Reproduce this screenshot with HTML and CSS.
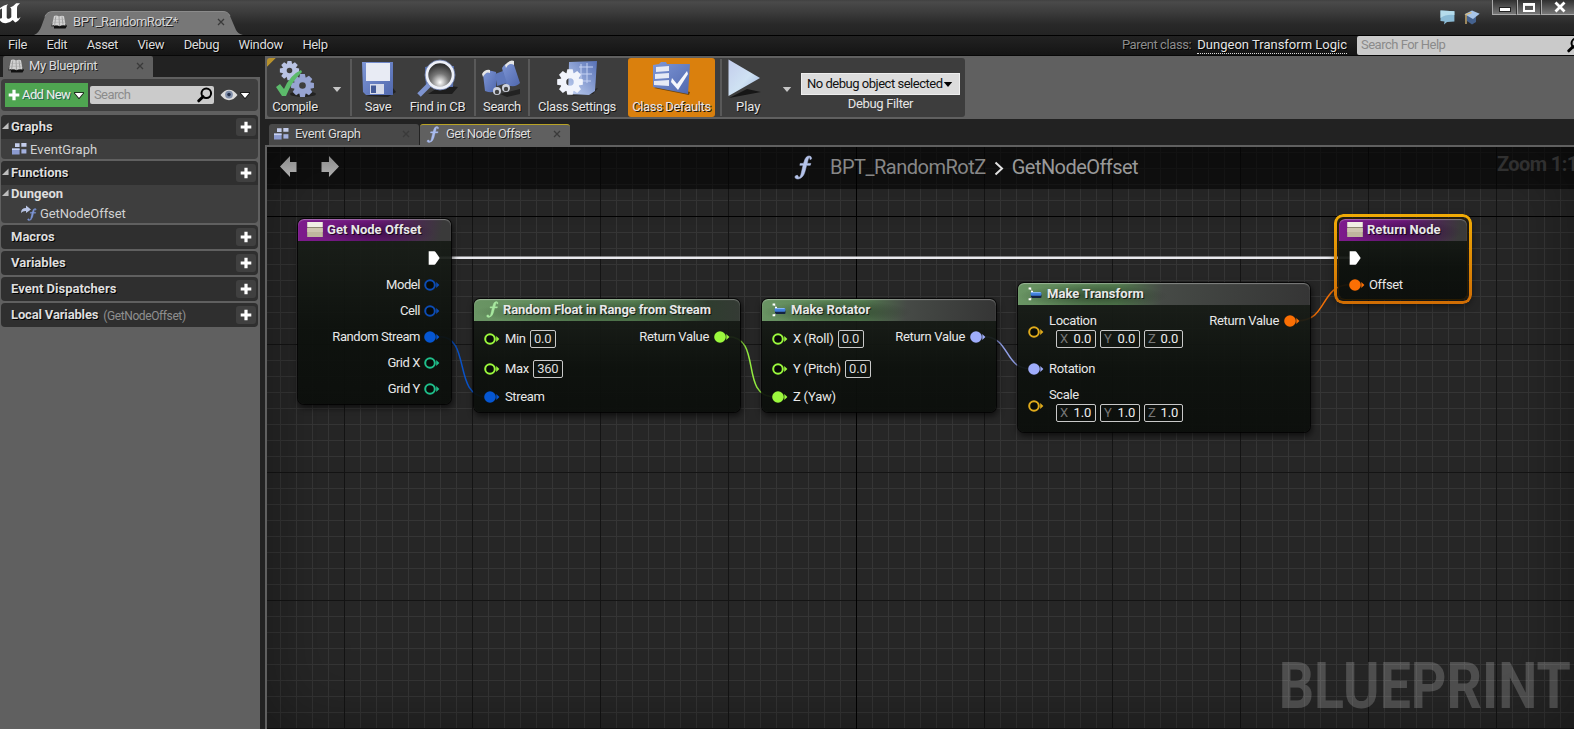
FILE: index.html
```html
<!DOCTYPE html>
<html lang="en">
<head>
<meta charset="utf-8">
<title>BPT_RandomRotZ</title>
<link rel="stylesheet" href="styles.css">
</head>
<body>
<svg class="defs" width="0" height="0">
  <defs>
    <linearGradient id="blue" x1="0" y1="0" x2="1" y2="1"><stop offset="0" stop-color="#7f97d6"/><stop offset="1" stop-color="#5068ae"/></linearGradient>
    <linearGradient id="pale" x1="0" y1="1" x2="1" y2="0"><stop offset="0" stop-color="#c3d3f3"/><stop offset="1" stop-color="#5670b5"/></linearGradient>
    <linearGradient id="playg" x1="0" y1="0" x2="1" y2="1"><stop offset="0" stop-color="#c3cdec"/><stop offset=".55" stop-color="#cfe2f3"/><stop offset="1" stop-color="#9db3dd"/></linearGradient>
    <radialGradient id="lens" cx=".5" cy=".78" r=".75"><stop offset="0" stop-color="#fff"/><stop offset=".45" stop-color="#777"/><stop offset="1" stop-color="#222"/></radialGradient>
    <linearGradient id="arrowg" x1="0" y1="0" x2="0" y2="1"><stop offset="0" stop-color="#8a8a8a"/><stop offset="1" stop-color="#b0b0b0"/></linearGradient>
  </defs>
  <symbol id="pin-open" viewBox="0 0 16 14"><circle cx="6" cy="7" r="4.8" fill="#080b08" stroke="currentColor" stroke-width="2"/><path d="M12.2 4 15.4 7 12.2 10Z" fill="currentColor"/></symbol>
  <symbol id="pin-full" viewBox="0 0 16 14"><circle cx="6" cy="7" r="5.8" fill="currentColor"/><path d="M12.3 4 15.4 7 12.3 10Z" fill="currentColor"/></symbol>
  <symbol id="exec" viewBox="0 0 12 14"><path d="M.7.3H6.3Q7 .3 7.5.9L11.7 7 7.5 13Q7 13.7 6.3 13.7H.7Z" fill="#fff"/></symbol>
  <symbol id="plus" viewBox="0 0 12 12"><path d="M4.4 .7h3.2v3.7H11.3v3.2H7.6V11.3H4.4V7.6H.7V4.4h3.7Z" fill="#fff"/></symbol>
  <symbol id="close" viewBox="0 0 8 8"><path d="M1 1 7 7M7 1 1 7" stroke="currentColor" stroke-width="1.3"/></symbol>
  <symbol id="caret" viewBox="0 0 10 7"><path d="M.8 1h8.4L5 6Z"/></symbol>
  <symbol id="tri" viewBox="0 0 8 8"><path d="M7.5 0V7.5H0Z" fill="#bdbdbd"/></symbol>
  <symbol id="mag" viewBox="0 0 16 16"><circle cx="9.3" cy="6.3" r="4.8" fill="none" stroke="#000" stroke-width="2"/><path d="M6 9.7 1.8 13.8" stroke="#000" stroke-width="3" stroke-linecap="round"/></symbol>
  <symbol id="book" viewBox="0 0 16 14"><path d="M.5 11.5 1 8 3 9.5V13.5H14.5L16 11 14.5 9Z" fill="#111"/><path d="M3 1Q5.5 0 8 1.5 11 0 13 1.2L14.6 10.5Q11 9.5 8.5 11.2 5 9.3 1 10.6Z" fill="#d2d2d2"/><path d="M8 1.5 8.5 11M4.8 1.5 3.7 9.8M11 1.5 12 9.6" stroke="#888" stroke-width=".7"/><path d="M2.4 4.4h11M1.8 7.3h12" stroke="#a5a5a5" stroke-width=".5"/></symbol>
  <symbol id="graph" viewBox="0 0 17 14"><path d="M4 1.2h4.6V5H4zM10.3 1h5.2v3.8h-5.2z" fill="#c4cdeb"/><path d="M1 6.5h7.6v6H1z" fill="#8c9bd0"/><path d="M1 6.5h7.6v1.6H1z" fill="#c7d1f0"/><path d="M10.4 7.2h5v4.4h-5z" fill="#a3b0dd"/></symbol>
  <symbol id="func" viewBox="0 0 14 18"><path d="M13 2.2Q12.8.5 11.2.5 8.5.6 7.6 4.3L7 6H4.6L4.3 7.4H6.7L5 14.5Q4.6 16.3 3.6 16.4L2.6 14.8Q1 14.6.6 16q.3 1.6 2.4 1.5Q6.6 17 8 12.4L9.3 7.4H12L12.4 6H9.7L10.5 2.7Q11 1.4 11.6 1.5L11.7 3Q12.8 3.3 13 2.2Z" fill="currentColor" stroke="currentColor" stroke-width=".4"/></symbol>
  <symbol id="gear" viewBox="-12 -12 24 24"><g fill="currentColor"><path id="tooth" d="M-2.3-11h4.6l.8 4h-6.2z"/><use href="#tooth" transform="rotate(45)"/><use href="#tooth" transform="rotate(90)"/><use href="#tooth" transform="rotate(135)"/><use href="#tooth" transform="rotate(180)"/><use href="#tooth" transform="rotate(225)"/><use href="#tooth" transform="rotate(270)"/><use href="#tooth" transform="rotate(315)"/></g><circle r="5.7" fill="none" stroke="currentColor" stroke-width="5"/></symbol>
  <symbol id="make" viewBox="0 0 14 14"><path d="M1 1 5 4.5M1 13 5 9.5" stroke="#bbb" stroke-width="1"/><path d="M.6.4h2.6v2H.6zM.6 11.3h2.6v2H.6zM3 4h2v1.8H3zM3 9h2v1.8H3z" fill="#fff"/><rect x="3" y="7" width="10.5" height="4" rx="1" fill="#14233f"/><rect x="2.6" y="5" width="10.8" height="3.8" rx="1" fill="#3e7edb"/><path d="M3 5.6h9.6" stroke="#8dbcf8"/></symbol>
  <symbol id="card" viewBox="0 0 16 15"><path d="M.3 0h15.4v15H.3z" fill="#8d8672"/><path d="M.3 0h15.4v5H.3z" fill="#f0ede4"/><path d="M.3 6h15.4V15H.3z" fill="#bfb69e"/><path d="M.3 6h15.4v4H.3z" fill="#cdc5af"/></symbol>
</svg>

<div class="app">
  <header class="titlebar">
    <svg class="logo" width="22" height="22" viewBox="0 0 22 22"><path d="M0 5Q4 1.6 8 1.2 6.4 2.6 6.7 4.5V14.5Q7.3 16.5 9.5 15.5 11 14.8 11.3 14V6.3Q11 4.6 10 4.6 13.6 3.4 16.2.3L20 .3Q17.2 2.5 17 5V14.3Q17.3 15.6 18.2 15.6 19 15.4 20.6 13.7 19.3 17.7 15.2 19.6L12.8 17Q10 20 5.8 20.2 1.5 20 0 17.5V15.4Q1.8 16 2 14.5V6Q1 4.6 0 7Z" fill="#fff"/></svg>
    <div class="doc-tab">
      <svg class="doc-shape" width="209" height="24" viewBox="0 0 209 24"><path d="M0 24Q5 22 7.5 15L11 5.5Q13 .5 19 .5H189Q194 .5 196 5L202 19Q204 23 209 24Z" fill="#777"/><path d="M11 5.5Q13 .5 19 .5H189Q194 .5 196 5" fill="none" stroke="#8b8b8b"/></svg>
      <div class="doc-label"><svg width="16" height="14"><use href="#book"/></svg><span>BPT_RandomRotZ*</span><svg class="x" width="8" height="8"><use href="#close"/></svg></div>
    </div>
    <div class="title-right">
      <svg width="15" height="15" viewBox="0 0 15 15"><path d="M.5.6 14.4 1.3V11.5L7 12 4 14.5 4.5 11.5.5 11Z" fill="#8bbbd6"/><path d="M.5.6 14.4 1.3V5Q6 4 .5 8Z" fill="#b5dcec"/></svg>
      <svg class="cap" width="16" height="15" viewBox="0 0 16 15"><path d="M3 6V11L8 14.5 12 12V7Z" fill="#45628e"/><path d="M.5 4.2 8 .4 15.7 3.8 9 9Z" fill="#a7c4e8"/><path d="M7.5 2.6 2 4.5V14" fill="none" stroke="#d8b878" stroke-width="1.3"/></svg>
      <div class="winbtns">
        <span class="wb w1"><svg width="12" height="5"><rect x=".5" y=".5" width="11" height="4" fill="#fff" stroke="#222"/></svg></span>
        <span class="wb w2"><svg width="14" height="11"><rect x="2" y="2" width="10" height="7" fill="none" stroke="#fff" stroke-width="2"/><path d="M3 3.4h8" stroke="#fff"/><rect x="3.5" y="4.5" width="7" height="3" fill="#555"/></svg></span>
        <span class="wb w3"><svg width="12" height="12" viewBox="0 0 12 12"><path d="M1.5 1.5 10.5 10.5M10.5 1.5 1.5 10.5" stroke="#fff" stroke-width="2.8"/></svg></span>
      </div>
    </div>
  </header>

  <nav class="menubar">
    <div class="menus"><span>File</span><span>Edit</span><span>Asset</span><span>View</span><span>Debug</span><span>Window</span><span>Help</span></div>
    <div class="parent"><span class="pc">Parent class:</span><span class="pl">Dungeon Transform Logic</span></div>
    <div class="help-search"><span>Search For Help</span><svg width="16" height="16"><use href="#mag"/></svg></div>
  </nav>

  <main class="main">
    <aside class="side">
      <div class="side-tabs"><div class="side-tab"><svg width="16" height="14"><use href="#book"/></svg><span>My Blueprint</span><svg class="x" width="8" height="8"><use href="#close"/></svg></div></div>
      <div class="side-body">
        <div class="tools">
          <div class="add"><svg width="12" height="12"><use href="#plus"/></svg><span>Add New</span><svg class="white-caret" width="10" height="7" viewBox="0 0 10 7"><use href="#caret"/></svg></div>
          <div class="search"><span>Search</span><svg width="16" height="16"><use href="#mag"/></svg></div>
          <svg class="eye" width="18" height="12" viewBox="0 0 18 12"><path d="M.5 6Q4.5.8 9 .8T17.5 6Q13.5 11.2 9 11.2T.5 6Z" fill="#dcdcdc"/><circle cx="9" cy="5.6" r="3.9" fill="#8290ab"/><circle cx="9" cy="5.6" r="1.8" fill="#26334d"/></svg>
          <svg class="white-caret" width="10" height="7" viewBox="0 0 10 7"><use href="#caret"/></svg>
        </div>
        <section class="sec">
          <div class="sec-head"><svg width="8" height="8"><use href="#tri"/></svg><b>Graphs</b><i class="plus"><svg width="12" height="12"><use href="#plus"/></svg></i></div>
          <div class="item"><svg width="17" height="14"><use href="#graph"/></svg><span>EventGraph</span></div>
        </section>
        <section class="sec">
          <div class="sec-head"><svg width="8" height="8"><use href="#tri"/></svg><b>Functions</b><i class="plus"><svg width="12" height="12"><use href="#plus"/></svg></i></div>
          <div class="cat"><svg width="8" height="8"><use href="#tri"/></svg><b>Dungeon</b></div>
          <div class="item fn"><svg width="17" height="16" viewBox="0 0 17 16"><path d="M1 8Q1 3 6 3V.5L11 4.6 6 8V6Q3 5.7 1 8Z" fill="#b9c5e6"/><svg x="7" y="3" width="10" height="13" viewBox="0 0 14 18" color="#7c95d6"><use href="#func"/></svg></svg><span>GetNodeOffset</span></div>
        </section>
        <section class="sec"><div class="sec-head"><b>Macros</b><i class="plus"><svg width="12" height="12"><use href="#plus"/></svg></i></div></section>
        <section class="sec"><div class="sec-head"><b>Variables</b><i class="plus"><svg width="12" height="12"><use href="#plus"/></svg></i></div></section>
        <section class="sec"><div class="sec-head"><b>Event Dispatchers</b><i class="plus"><svg width="12" height="12"><use href="#plus"/></svg></i></div></section>
        <section class="sec"><div class="sec-head"><b class="lv">Local Variables</b><small>(GetNodeOffset)</small><i class="plus"><svg width="12" height="12"><use href="#plus"/></svg></i></div></section>
      </div>
    </aside>

    <div class="work">
      <div class="toolbar">
        <div class="tools-in">
          <div class="tb compile"><svg width="42" height="40" viewBox="0 0 42 40"><ellipse cx="29" cy="35" rx="13" ry="3" fill="#222"/><svg x="5" y="1" width="21" height="21" color="#b9c3e4"><use href="#gear"/></svg><svg x="16" y="14" width="25" height="25" color="#97a4d2"><use href="#gear"/></svg><path d="M2 28 6 25 10 30Q16 16 27 11L28 13Q18 22 12 37H8Z" fill="#5cba6b"/></svg><span>Compile</span></div>
          <svg class="tcaret c1" width="10" height="7"><use href="#caret"/></svg>
          <i class="sep s1"></i>
          <div class="tb save"><svg width="36" height="40" viewBox="0 0 36 40"><path d="M6 37 33 29 36 33 28 38Z" fill="#222"/><path d="M2 3H33V36H6L3 33Z" fill="url(#blue)"/><path d="M6 4H30V22H6Z" fill="#e8ebf4"/><path d="M10 25H24V35H10Z" fill="#d6dbea"/><path d="M11 26.5h5V34h-5z" fill="#445a97"/></svg><span>Save</span></div>
          <div class="tb find"><svg width="44" height="40" viewBox="0 0 44 40"><path d="M12 35H36L42 28 26 26Z" fill="#1d1d1d"/><path d="M9 8 14 7H38L37 28H10Z" fill="#5870ad"/><path d="M14 25 3 36" stroke="#7e94d0" stroke-width="5"/><circle cx="24" cy="16" r="13.2" fill="url(#lens)" stroke="#edf0f8" stroke-width="3"/><circle cx="24" cy="16" r="15" fill="none" stroke="#7488be" stroke-width=".7"/></svg><span>Find in CB</span></div>
          <i class="sep s2"></i>
          <div class="tb srch"><svg width="40" height="40" viewBox="0 0 40 40"><path d="M18 35 38 30V35L25 38Z" fill="#222"/><path d="M1 15Q5 10 10 12L14 13V31Q11 35 3 32Z" fill="url(#blue)"/><path d="M20 9Q24 3 31 3L38 24Q34 29 24 26Z" fill="url(#blue)"/><path d="M13 15 21 12 25 24 15 27Z" fill="#5f78bb"/><path d="M0 15Q3 10 8 11L8 14Q4 12 1 18ZM23 6Q28 0 32 2L32 6Q27 3 24 9Z" fill="#e7e7e7"/><circle cx="15" cy="32" r="4" fill="#cfd3de"/><circle cx="15" cy="33" r="2.2" fill="#444"/><circle cx="24" cy="29" r="4" fill="#cfd3de"/><circle cx="24" cy="30" r="2.2" fill="#444"/></svg><span>Search</span></div>
          <i class="sep s3"></i>
          <div class="tb cset"><svg width="42" height="40" viewBox="0 0 42 40"><path d="M14 37 37 35 42 29Z" fill="#242424"/><path d="M13 3 41 2 39 32 33 36 12 35Z" fill="url(#pale)"/><path d="M23 8H37M23 15H36M25 22H35M25 5V20M31 4V24" stroke="#c5d2f3" fill="none"/><svg x="0" y="9" width="28" height="28" color="#f1f4fc"><use href="#gear"/></svg></svg><span>Class Settings</span></div>
          <div class="tb cdef"><svg width="42" height="40" viewBox="0 0 42 40"><path d="M3 29 38 36 39 33 10 26Z" fill="#714507"/><path d="M2 6 8 5 10 3H15L16 5H39L37 35 2 28Z" fill="url(#blue)"/><path d="M5 8 18 7V12L5 13ZM4 15 18 14V19L4 20ZM3 22 18 21V27L3 26Z" fill="#e6eaf5"/><path d="M21 19 26 25 36 12 37 15 27 31 20 23Z" fill="#f4f6fc"/></svg><span>Class Defaults</span></div>
          <i class="sep s4"></i>
          <div class="tb play"><svg width="36" height="40" viewBox="0 0 36 40"><path d="M2 39 34 33 20 30Z" fill="#161616"/><path d="M1.5.5 33 19 1.5 37Z" fill="url(#playg)"/></svg><span>Play</span></div>
          <svg class="tcaret c2" width="10" height="7"><use href="#caret"/></svg>
          <div class="filter"><div class="combo"><span>No debug object selected</span><svg width="10" height="7"><use href="#caret"/></svg></div><span class="flabel">Debug Filter</span></div>
        </div>
      </div>
      <div class="tabs">
        <div class="tab"><svg width="17" height="14"><use href="#graph"/></svg><span>Event Graph</span><svg class="x" width="8" height="8"><use href="#close"/></svg></div>
        <div class="tab active"><svg width="14" height="17" color="#a9bbee"><use href="#func"/></svg><span>Get Node Offset</span><svg class="x" width="8" height="8"><use href="#close"/></svg></div>
      </div>
      <div class="graph">
        <div class="crumbs">
          <svg class="nav back" width="17" height="23" viewBox="0 0 17 23"><path d="M0 11.5 10 1V7H16.5V17H10V22Z" fill="url(#arrowg)"/></svg>
          <svg class="nav" width="18" height="23" viewBox="0 0 18 23"><path d="M18 11.5 8 1V7H.5V17H8V22Z" fill="url(#arrowg)"/></svg>
          <div class="path"><svg width="19" height="25" color="#b5c3ea"><use href="#func"/></svg><span class="p1">BPT_RandomRotZ</span><svg class="chev" width="10" height="15" viewBox="0 0 10 15"><path d="M1.5 1.5 8 7.5 1.5 13.5" fill="none" stroke="#e2e2e2" stroke-width="2"/></svg><span class="p2">GetNodeOffset</span></div>
          <div class="zoomlbl">Zoom 1:1</div>
        </div>
        <div class="watermark">BLUEPRINT</div>
        <svg class="wires" width="1307" height="582" viewBox="267 147 1307 582" fill="none">
          <path d="M440 257.8H1350" stroke="#e9e9ee" stroke-width="2.6"/>
          <path d="M440 336.7C471 336.7 453 396.7 486 396.7" stroke="#0a52c6" stroke-width="1.5"/>
          <path d="M728 336.7C763 336.7 739 396.7 774 396.7" stroke="#93ec40" stroke-width="1.5"/>
          <path d="M984 336.7C1010 336.7 1004 368.7 1030 368.7" stroke="#92a0e8" stroke-width="1.5"/>
          <path d="M1298 320.7C1328 320.7 1320 284.7 1350 284.7" stroke="#f27006" stroke-width="1.5"/>
        </svg>

        <div class="node n1 purple">
          <div class="nhead"><svg width="16" height="15"><use href="#card"/></svg><span>Get Node Offset</span></div>
          <div class="nbody"><div class="col out">
            <div class="row"><svg class="ex" width="12" height="14"><use href="#exec"/></svg></div>
            <div class="row"><span>Model</span><svg class="obj" width="16" height="14"><use href="#pin-open"/></svg></div>
            <div class="row"><span>Cell</span><svg class="obj" width="16" height="14"><use href="#pin-open"/></svg></div>
            <div class="row"><span>Random Stream</span><svg class="struct" width="16" height="14"><use href="#pin-full"/></svg></div>
            <div class="row"><span>Grid X</span><svg class="int" width="16" height="14"><use href="#pin-open"/></svg></div>
            <div class="row"><span>Grid Y</span><svg class="int" width="16" height="14"><use href="#pin-open"/></svg></div>
          </div></div>
        </div>

        <div class="node n2 green">
          <div class="nhead"><svg class="nf" width="13" height="17"><use href="#func"/></svg><span>Random Float in Range from Stream</span></div>
          <div class="nbody">
            <div class="col in">
              <div class="row tall"><svg class="float" width="16" height="14"><use href="#pin-open"/></svg><span>Min</span><em class="val">0.0</em></div>
              <div class="row tall"><svg class="float" width="16" height="14"><use href="#pin-open"/></svg><span>Max</span><em class="val w">360</em></div>
              <div class="row"><svg class="struct" width="16" height="14"><use href="#pin-full"/></svg><span>Stream</span></div>
            </div>
            <div class="col out"><div class="row"><span class="rv">Return Value</span><svg class="float" width="16" height="14"><use href="#pin-full"/></svg></div></div>
          </div>
        </div>

        <div class="node n3 green short">
          <div class="nhead"><svg width="14" height="14"><use href="#make"/></svg><span>Make Rotator</span></div>
          <div class="nbody">
            <div class="col in">
              <div class="row tall"><svg class="float" width="16" height="14"><use href="#pin-open"/></svg><span class="ax">X (Roll)</span><em class="val">0.0</em></div>
              <div class="row tall"><svg class="float" width="16" height="14"><use href="#pin-open"/></svg><span class="ax">Y (Pitch)</span><em class="val">0.0</em></div>
              <div class="row"><svg class="float" width="16" height="14"><use href="#pin-full"/></svg><span class="ax">Z (Yaw)</span></div>
            </div>
            <div class="col out"><div class="row"><span class="rv">Return Value</span><svg class="rot" width="16" height="14"><use href="#pin-full"/></svg></div></div>
          </div>
        </div>

        <div class="node n4 green short">
          <div class="nhead"><svg width="14" height="14"><use href="#make"/></svg><span>Make Transform</span></div>
          <div class="nbody">
            <div class="col in">
              <div class="row vec"><svg class="vecp" width="16" height="14"><use href="#pin-open"/></svg><div class="stack"><span>Location</span><div class="xyz"><em class="val"><i>X</i>0.0</em><em class="val"><i>Y</i>0.0</em><em class="val"><i>Z</i>0.0</em></div></div></div>
              <div class="row mid"><svg class="rot" width="16" height="14"><use href="#pin-full"/></svg><span>Rotation</span></div>
              <div class="row vec"><svg class="vecp" width="16" height="14"><use href="#pin-open"/></svg><div class="stack"><span>Scale</span><div class="xyz"><em class="val"><i>X</i>1.0</em><em class="val"><i>Y</i>1.0</em><em class="val"><i>Z</i>1.0</em></div></div></div>
            </div>
            <div class="col out"><div class="row"><span class="rv">Return Value</span><svg class="trans" width="16" height="14"><use href="#pin-full"/></svg></div></div>
          </div>
        </div>

        <div class="node n5 purple selected">
          <div class="nhead"><svg width="16" height="15"><use href="#card"/></svg><span>Return Node</span></div>
          <div class="nbody"><div class="col in">
            <div class="row"><svg class="ex" width="12" height="14"><use href="#exec"/></svg></div>
            <div class="row"><svg class="trans" width="16" height="14"><use href="#pin-full"/></svg><span>Offset</span></div>
          </div></div>
        </div>
      </div>
    </div>
  </main>
</div>
</body>
</html>
```
FILE: styles.css
```css
* { box-sizing: border-box; }
body { margin: 0; background: #222; font: 13px/16px Roboto, "Liberation Sans", sans-serif; color: #dcdcdc; overflow: hidden; letter-spacing: -.35px; }
svg { display: block; flex: none; }
i, em { font-style: normal; }
span, b { white-space: nowrap; }
.defs { position: absolute; }
.app { width: 1574px; height: 729px; display: flex; flex-direction: column; overflow: hidden; }

/* title bar */
.titlebar { height: 35px; flex: none; display: flex; align-items: flex-end; background: linear-gradient(#414141, #4a4a4a 2px, #3c3c3c 12px, #292929 24px, #232323); }
.logo { align-self: flex-start; margin-top: 3px; }
.doc-tab { display: grid; margin-left: 12px; height: 24px; }
.doc-tab > * { grid-area: 1 / 1; }
.doc-label { display: flex; align-items: center; padding: 0 18px 2px 17px; color: #d6d6d6; text-shadow: 1px 1px #222; letter-spacing: -.45px; }
.doc-label span { margin: 0 auto 0 6px; }
.x { color: #3a3a3a; }
.title-right { margin-left: auto; align-self: flex-start; display: flex; }
.title-right > svg { margin-top: 10px; }
.title-right .cap { margin-left: 9px; }
.winbtns { display: flex; margin-left: 12px; width: 82px; height: 15px; }
.wb { display: flex; flex: none; align-items: center; justify-content: center; background: linear-gradient(#303030, #777); border: 1px solid #aaa; border-top: 0; border-right-color: #333; }
.w1 { width: 25px; padding-top: 4px; } .w2 { width: 24px; } .w3 { width: 40px; border-right: 0; padding-right: 4px; }

/* menu bar */
.menubar { height: 20px; flex: none; display: flex; align-items: center; background: linear-gradient(#222, #141414); border-top: 1px solid #000; text-shadow: 1px 1px #000; }
.menus { display: flex; padding: 0 0 1px 8px; }
.menus span { margin-right: 19.5px; }
.parent { display: flex; margin-left: auto; padding-right: 10px; }
.pc { color: #8c8c8c; margin-right: 6px; letter-spacing: -.4px; }
.pl { color: #e4e4e4; border-bottom: 1px dotted #ddd; letter-spacing: 0; }
.help-search { width: 217px; height: 19px; background: #cacaca; border-radius: 2px 0 0 2px; display: flex; align-items: center; justify-content: space-between; padding: 0 0 1px 4px; color: #8b8b8b; text-shadow: none; overflow: hidden; letter-spacing: -.5px; }
.help-search svg { margin-right: -9px; }

.main { flex: 1; display: flex; min-height: 0; border-top: 1px solid #080808; }

/* my blueprint panel */
.side { width: 260px; flex: none; display: flex; flex-direction: column; }
.side-tabs { height: 21px; padding-left: 3px; }
.side-tab { width: 150px; height: 21px; display: flex; align-items: center; background: #606060; border-radius: 2px 2px 0 0; padding: 0 9px 1px 5px; text-shadow: 1px 1px #222; }
.side-tab span { margin: 0 auto 0 5px; }
.side-body { flex: 1; background: #606060; padding: 2px 2px 0 1px; }
.tools { height: 32px; background: #3e3e3e; border-radius: 4px; display: flex; align-items: center; padding-left: 4px; margin-bottom: 4px; }
.add { width: 83px; height: 24px; background: #4fa551; display: flex; align-items: center; padding-left: 3px; color: #eee; text-shadow: 1px 1px #265; letter-spacing: -.6px; }
.add span { margin: 0 4px 0 2px; }
.white-caret { fill: #fff; stroke: #111; stroke-width: 1.6px; paint-order: stroke; overflow: visible; }
.search { width: 124px; height: 18px; background: #cbcbcb; border-radius: 2px; margin: 0 6px 0 2px; display: flex; align-items: center; justify-content: space-between; padding: 0 1px 0 4px; color: #8c8c8c; letter-spacing: -.6px; }
.eye { margin-right: 2px; }
.sec { background: #3e3e3e; border-radius: 4px; overflow: hidden; margin-bottom: 2px; }
.sec-head { height: 24px; background: #2f2f2f; display: flex; align-items: center; padding: 0 2px 0 10px; text-shadow: 1px 1px #000; }
.sec-head > svg, .cat > svg { margin: -3px 2px 0 -9px; width: 7px; }
.sec b { font-weight: 700; color: #dedede; letter-spacing: 0; }
.sec b.lv { letter-spacing: -.15px; }
.sec small { font-size: 12px; color: #8f8f8f; margin: 2px 0 0 5px; text-shadow: none; letter-spacing: -.4px; }
.plus { width: 20px; height: 18px; border-radius: 3px; background: #404040; margin-left: auto; display: flex; align-items: center; justify-content: center; }
.item { height: 20px; display: flex; align-items: center; padding: 0 0 0 10px; color: #d2d2d2; letter-spacing: .1px; }
.item span { margin: 2px 0 0 2px; }
.cat { height: 18px; display: flex; align-items: center; padding-left: 10px; }
.item.fn { padding-left: 19px; letter-spacing: -.08px; }
.item.fn span { margin: 1px 0 0 3px; }

/* toolbar */
.work { flex: 1; min-width: 0; margin-left: 5px; display: flex; flex-direction: column; }
.toolbar { height: 63px; flex: none; background: #606060; padding: 2px; }
.tools-in { width: 698px; height: 59px; background: linear-gradient(135deg, #b8922c 6px, transparent 6.5px), #3d3d3d; border-radius: 3px; display: flex; align-items: center; color: #e6e6e6; }
.tb { flex: none; display: flex; flex-direction: column; align-items: center; height: 59px; padding-top: 1px; text-shadow: 1px 1px #111; }
.tb span { line-height: 15px; }
.compile { width: 56px; } .tcaret { fill: #c6c6c6; } .c1 { margin: 3px 8px 0 9px; }
.sep { flex: none; width: 2px; height: 57px; background: #595959; }
.save { width: 52px; } .find { width: 67px; margin-right: 3px; letter-spacing: -.25px; } .srch { width: 52px; } .cset { width: 94px; margin-right: 4px; } .cdef { width: 87px; background: #da800d; border-radius: 3px; }
.s4 { margin-left: 5px; }
.play { width: 48px; align-items: flex-start; padding-left: 5px; letter-spacing: 0; } .play span { margin-left: 9px; } .c2 { margin: 3px 9px 0 12px; }
.filter { flex: none; width: 159px; text-align: center; padding-top: 11px; }
.combo { height: 22px; background: #dcdcdc; border: 1px solid #eee; color: #111; display: flex; align-items: center; padding: 0 6px 0 5px; justify-content: space-between; letter-spacing: -.48px; }
.flabel { line-height: 18px; }

/* document tabs */
.tabs { height: 26px; flex: none; display: flex; align-items: flex-end; padding-left: 4px; gap: 1px; }
.tab { width: 150px; height: 21px; display: flex; align-items: center; background: #484848; border-radius: 3px 3px 0 0; padding: 0 9px 1px 4px; text-shadow: 1px 1px #222; }
.tab.active { background: #606060; border-top: 1px solid #b9a325; padding: 0 9px 2px 6px; letter-spacing: -.6px; }
.tab span { margin: 0 auto 0 5px; }
.tab.active span { margin-left: 6px; }

/* graph */
.graph { flex: 1; position: relative; overflow: hidden; border: 2px solid #606060; border-right: 0; border-bottom: 0;
  background:
    linear-gradient(#000, #000) 589px 0 / 1px 100% no-repeat,
    linear-gradient(#000, #000) 0 69px / 100% 1px no-repeat,
    linear-gradient(90deg, #141414 1px, transparent 1px) 77px 0 / 128px 128px,
    linear-gradient(#141414 1px, transparent 1px) 0 69px / 128px 128px,
    linear-gradient(90deg, #353535 1px, transparent 1px) 13px 0 / 16px 16px,
    linear-gradient(#353535 1px, transparent 1px) 0 5px / 16px 16px,
    #262626; }
.graph::before { content: ""; position: absolute; inset: 0; box-shadow: inset 0 0 70px rgba(0,0,0,.38); }
.crumbs { position: relative; height: 42px; background: rgba(0,0,0,.58); display: flex; align-items: center; padding: 0 0 2px 13px; }
.nav { margin-top: -1px; }
.nav.back { margin-right: 24px; }
.path { display: flex; align-items: center; margin-left: 455px; font-size: 20px; line-height: 24px; color: #878787; letter-spacing: -.5px; }
.p1 { margin-left: 17px; } .chev { margin: 2px 8px 0; } .p2 { color: #999; letter-spacing: -.55px; }
.zoomlbl { position: absolute; left: 1230px; top: 5px; font: 700 20px/24px Roboto, sans-serif; color: #303030; white-space: nowrap; letter-spacing: -.6px; }
.watermark { position: absolute; right: 3px; bottom: 5px; font: 700 65px/76px Roboto, sans-serif; letter-spacing: 0; color: rgba(255,255,255,.19); transform: scaleX(.852); transform-origin: 100% 50%; }
.wires { position: absolute; left: 0; top: 0; }

.node { position: absolute; border-radius: 6px; background: linear-gradient(rgba(27,32,26,.93), rgba(13,17,13,.94) 60%, rgba(11,14,11,.94)); box-shadow: 0 0 0 1px rgba(0,0,0,.75), 1px 3px 6px 1px rgba(0,0,0,.6); color: #e8e8e8; }
.nhead { height: 22px; border-radius: 6px 6px 0 0; display: flex; align-items: center; padding-left: 9px; font-weight: 700; letter-spacing: .04px; text-shadow: 1px 1px rgba(0,0,0,.7); box-shadow: inset 0 1px 1px rgba(255,255,255,.35); }
.nhead > svg { margin-top: -1px; }
.nhead span { margin-left: 4px; }
.purple .nhead { background: radial-gradient(ellipse 60px 12px at 50% 60%, rgba(30,0,40,.5), transparent), linear-gradient(100deg, #7e1b8d, #6a1878 50%, #4a2a50 75%, #3a3a3a 93%); }
.green .nhead { background: radial-gradient(ellipse 120px 12px at 45% 60%, rgba(15,25,15,.5), transparent), linear-gradient(90deg, #6a9564, #557e51 60%, #2f3d2f 88%, #343a34); }
.short .nhead { background: radial-gradient(ellipse 75px 12px at 75px 60%, rgba(15,25,15,.5), transparent), linear-gradient(95deg, #6a9564, #527a4e 100px, #464a46 145px, #353535); }
.nbody { display: flex; justify-content: space-between; }
.row { height: 26px; display: flex; align-items: center; }
.in .row { gap: 5px; } .out .row { gap: 4px; justify-content: flex-end; }
.row.tall { height: 30px; }
.in { padding-left: 10px; } .out { padding-right: 10px; }
.ax { letter-spacing: -.2px; }
.rv { letter-spacing: -.3px; margin-right: 1px; }
.val { height: 18px; min-width: 26px; border: 1px solid #c9c9c9; border-radius: 2px; line-height: 16px; text-align: center; color: #ddd; letter-spacing: -.2px; }
.tall .val { margin-left: -1px; }
.val.w { min-width: 30px; }
.obj { color: #0d4cb4; } .struct { color: #0556d2; } .int { color: #1fbf8b; } .float { color: #9bf83d; } .rot { color: #9fadfb; } .vecp { color: #e0ab1c; } .trans { color: #fb6f04; }

.n1 { left: 31px; top: 72px; width: 153px; height: 185px; } .n1 .nbody, .n5 .nbody { padding-top: 5px; } .n1 .col { width: 100%; padding-right: 11px; letter-spacing: -.43px; } .n1 .ex, .n5 .ex { margin-top: -2px; }
.n2 { left: 207px; top: 152px; width: 266px; height: 113px; } .n2 .nbody, .n3 .nbody { padding-top: 3px; }
.n2 .nhead { padding-left: 12px; letter-spacing: -.12px; } .nf { color: #a7e89f; }
.n2 .out, .n4 .out { padding-right: 10px; }
.n3 { left: 495px; top: 152px; width: 234px; height: 113px; }
.n4 { left: 751px; top: 136px; width: 292px; height: 149px; } .n4 .out { padding-top: 3px; }
.n3 .nhead, .n4 .nhead { padding-left: 10px; } .n3 .nhead span, .n4 .nhead span { margin-left: 5px; }
.n4 .in { padding-top: 7px; }
.row.vec { height: 36px; } .vec > svg { margin-top: 3px; } .row.mid { margin: 8px 0 4px; }
.stack > span { display: block; height: 18px; line-height: 17px; }
.xyz { display: flex; gap: 4px; padding-left: 7px; }
.xyz .val { width: 40px; display: flex; justify-content: space-between; padding: 0 4px 0 3px; color: #eee; } .xyz .val:last-child { width: 39px; } .xyz i { color: #777; }
.n5 { left: 1072px; top: 72px; width: 128px; height: 80px; }
.n5 .in { padding-left: 10px; }
.selected { box-shadow: 0 0 0 1px #2b1c00, 0 3px 8px 4px rgba(0,0,0,.5); }
.selected::before { content: ""; position: absolute; inset: -5px; border-radius: 9px; padding: 3px; background: linear-gradient(#f0ab06, #cf6c04); -webkit-mask: linear-gradient(#000 0 0) content-box exclude, linear-gradient(#000 0 0); mask: linear-gradient(#000 0 0) content-box exclude, linear-gradient(#000 0 0); }
.n5 .nhead { padding-left: 8px; }
.n5 .row span { margin-left: -1px; }
```
